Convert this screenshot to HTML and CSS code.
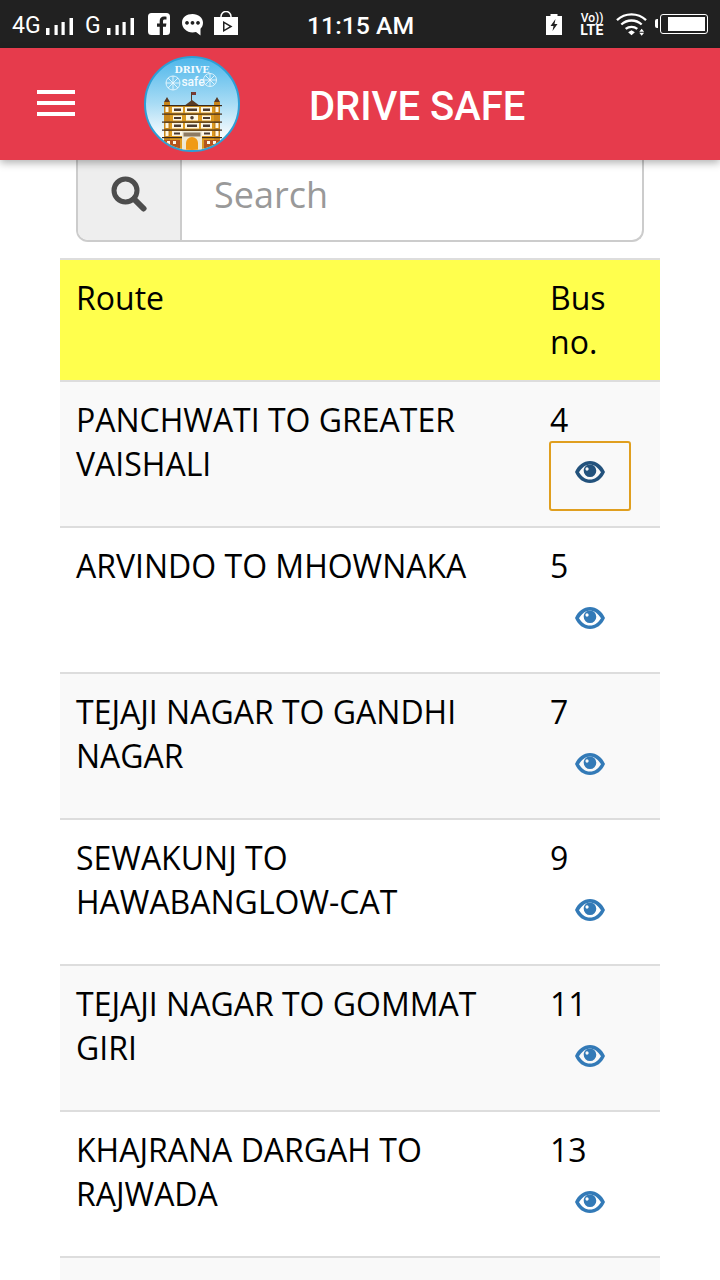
FILE: index.html
```html
<!DOCTYPE html>
<html lang="en">
<head>
<meta charset="utf-8">
<title>Drive Safe</title>
<link rel="stylesheet" href="styles.css">
</head>
<body>
<svg class="defs" width="0" height="0" aria-hidden="true">
  <symbol id="eye" viewBox="0 0 30 24">
    <path fill-rule="evenodd" d="M15 1C8.500 1 3.200 5 0 12c3.200 7 8.500 11 15 11s11.800-4 15-11C26.800 5 21.500 1 15 1zM4 12.200C6.700 8.200 10.500 4.600 15 4.600s8.300 3.600 11 7.600C23.300 16.600 19.800 19.600 15 19.600S6.700 16.600 4 12.200z"/>
    <path fill-rule="evenodd" d="M15 4.500a6.300 6.300 0 1 1-6.300 6.300c0-3.500 2.800-6.300 6.300-6.300zM12 7.200c-.9 0-1.500.8-1.500 1.800s.6 1.700 1.500 1.700 1.600-.7 1.600-1.700-.7-1.800-1.600-1.800z"/>
  </symbol>
  <symbol id="bars" viewBox="0 0 28 17">
    <rect x="0" y="10" width="3.500" height="7"/><rect x="8.500" y="7" width="3.200" height="10"/><rect x="15.500" y="4" width="3.200" height="13"/><rect x="23.500" y="0" width="3.500" height="17"/>
  </symbol>
</svg>
<div class="statusbar">
  <div class="status-left">
    <span class="net net-4g">4G</span>
    <svg class="bars" aria-hidden="true"><use href="#bars"/></svg>
    <span class="net net-g">G</span>
    <svg class="bars" aria-hidden="true"><use href="#bars"/></svg>
    <svg class="ic-fb" viewBox="0 0 22 22" aria-hidden="true"><path fill-rule="evenodd" d="M3.500 0h15A3.500 3.500 0 0 1 22 3.500v15a3.500 3.500 0 0 1-3.500 3.500H15v-8.300h2.900l.5-3.300H15V8.300c0-1 .4-1.700 1.800-1.700h1.700V3.700c-.8-.1-1.700-.2-2.500-.2-2.600 0-4.300 1.600-4.300 4.400v2.500H9v3.300h2.700V22H3.500A3.500 3.500 0 0 1 0 18.500v-15A3.500 3.500 0 0 1 3.500 0z"/></svg>
    <svg class="ic-msg" viewBox="0 0 21 22" aria-hidden="true"><path fill-rule="evenodd" d="M10.500 0c5.800 0 10.500 3.700 10.500 8.700 0 2.500-1 4.500-2.500 6V21.500L14 18c-1.100.3-2.300.4-3.500.4C4.700 18.400 0 14 0 8.700S4.700 0 10.500 0zM5 7a1.900 1.900 0 1 0 .01 0zM10.500 7a1.900 1.900 0 1 0 .01 0zM16 7a1.900 1.900 0 1 0 .01 0z"/></svg>
    <svg class="ic-play" viewBox="0 0 24 24" aria-hidden="true"><path fill="none" stroke="#fff" stroke-width="1.500" d="M7 9V5.500a5 5 0 0 1 10 0V9"/><path fill-rule="evenodd" d="M0 6h24v18H0zM9 10v11l9.500-5.500zM10.500 12.500l5 3-5 3z"/></svg>
  </div>
  <div class="status-time">11:15 AM</div>
  <div class="status-right">
    <svg class="ic-charge" viewBox="0 0 16 21" aria-hidden="true"><path fill-rule="evenodd" d="M4.500 0h7v2H16v19H0V2h4.500zM9.500 5L4.500 12h3l-1 5 5-7h-3z"/></svg>
    <span class="volte"><span class="volte-top">Vo))</span><span class="volte-bot">LTE</span></span>
    <svg class="ic-wifi" viewBox="0 0 32 24" aria-hidden="true"><g fill="none" stroke="#fff" stroke-width="2.400"><path d="M1 8c8.500-8 21.500-8 30 0"/><path d="M5.500 12.500c6-5.500 15-5.500 21 0"/><path d="M10 17c3.500-2.800 8.500-2.800 12 0"/></g><path d="M12.500 20.500l3.500-2 3.500 2-3.500 3zM26.500 17l2.500 3h-5zM24 21h5l-2.500 3z"/></svg>
    <span class="battery"><span class="battery-fill"></span></span>
  </div>
</div>
<header class="appbar">
  <button class="menu" aria-label="Menu"><span></span><span></span><span></span></button>
  <svg class="logo" viewBox="0 0 96 96" role="img" aria-label="Drive Safe logo">
    <defs><linearGradient id="sky" x1="0" y1="0" x2="0" y2="1"><stop offset="0" stop-color="#4db6ea"/><stop offset=".5" stop-color="#a9dcf5"/><stop offset=".82" stop-color="#f4fafd"/></linearGradient><clipPath id="disc"><circle cx="48" cy="48" r="46"/></clipPath></defs>
    <circle cx="48" cy="48" r="47" fill="url(#sky)" stroke="#2e9fd6" stroke-width="2"/>
    <g clip-path="url(#disc)">
      <text x="48" y="17" class="logo-drive" text-anchor="middle">DRIVE</text>
      <text x="49" y="30" class="logo-safe" text-anchor="middle">safe</text>
      <g fill="none" stroke="#eaf7fd" stroke-width=".9"><circle cx="29" cy="27" r="7"/><path d="M29 20v14M22 27h14M24 22l10 10M34 22l-10 10"/><circle cx="66" cy="24" r="6.500"/><path d="M66 17.500v13M59.500 24h13M61.500 19.500l9 9M70.500 19.500l-9 9"/></g>
      <path d="M47 36h1v9h-1z" fill="#5a3b25"/><path d="M48 36h4v3h-4z" fill="#7a3b35"/>
      <rect x="20" y="50" width="56" height="46" fill="#dd9a20"/>
      <rect x="20" y="46" width="6" height="50" fill="#c9861b"/><rect x="70" y="46" width="6" height="50" fill="#c9861b"/>
      <path d="M20 46l3-5 3 5zM70 46l3-5 3 5zM40 50l8-6 8 6z" fill="#5a3b25"/>
      <g fill="#3c2a1d"><rect x="18" y="49" width="60" height="1.200"/><rect x="18" y="57.500" width="60" height="1.200"/><rect x="18" y="65.500" width="60" height="1.200"/><rect x="18" y="73.500" width="60" height="1.200"/><rect x="18" y="81" width="60" height="1.200"/></g>
      <g fill="#fdf6e4"><rect x="28" y="51" width="11" height="5.500"/><rect x="57" y="51" width="11" height="5.500"/><rect x="41" y="51" width="14" height="5.500"/><rect x="28" y="67" width="11" height="5.500"/><rect x="57" y="67" width="11" height="5.500"/><rect x="41" y="67" width="14" height="5.500"/><rect x="29" y="59.500" width="9" height="5"/><rect x="58" y="59.500" width="9" height="5"/><rect x="42" y="59" width="12" height="5.500"/><rect x="21.500" y="51" width="3" height="5"/><rect x="71.500" y="51" width="3" height="5"/><rect x="21.500" y="67" width="3" height="5"/><rect x="71.500" y="67" width="3" height="5"/><rect x="21.500" y="75" width="3" height="5"/><rect x="71.500" y="75" width="3" height="5"/><rect x="28" y="75" width="10" height="5"/><rect x="58" y="75" width="10" height="5"/></g>
      <g fill="#4a3a30"><rect x="30" y="52.500" width="7" height="2.500"/><rect x="59" y="52.500" width="7" height="2.500"/><rect x="43" y="52.500" width="10" height="2.500"/><rect x="30" y="68.500" width="7" height="2.500"/><rect x="59" y="68.500" width="7" height="2.500"/><rect x="43" y="68.500" width="10" height="2.500"/><rect x="30" y="61" width="7" height="2"/><rect x="59" y="61" width="7" height="2"/><circle cx="48" cy="61.800" r="1.800"/><rect x="30" y="76.500" width="6" height="2"/><rect x="60" y="76.500" width="6" height="2"/></g>
      <rect x="38" y="75" width="20" height="21" fill="#efe8d4"/><rect x="39.500" y="76.500" width="17" height="4" fill="#8d7a63"/>
      <path d="M42 96V87a6 6 0 0 1 12 0v9z" fill="#f09a16"/>
      <g fill="#b3541e"><rect x="20" y="84" width="16" height="12"/><rect x="60" y="84" width="16" height="12"/></g>
      <g fill="#fdf6e4"><rect x="23" y="85" width="3" height="3"/><rect x="29" y="85" width="3" height="3"/><rect x="63" y="85" width="3" height="3"/><rect x="69" y="85" width="3" height="3"/></g>
    </g>
  </svg>
  <h1 class="title">DRIVE SAFE</h1>
</header>
<main class="content">
  <div class="search">
    <span class="search-addon">
      <svg viewBox="0 0 36 36" aria-hidden="true"><circle cx="14.500" cy="14.500" r="11.500" fill="none" stroke="#4d4d4d" stroke-width="5"/><path d="M23 23l9.500 9.500" stroke="#4d4d4d" stroke-width="6" stroke-linecap="round"/></svg>
    </span>
    <span class="search-input">Search</span>
  </div>
  <table class="routes">
    <thead>
      <tr><th class="col-route">Route</th><th class="col-bus">Bus no.</th></tr>
    </thead>
    <tbody>
      <tr><td>PANCHWATI TO GREATER VAISHALI</td><td>4<a class="view view-active" href="#"><svg aria-hidden="true"><use href="#eye"/></svg></a></td></tr>
      <tr><td>ARVINDO TO MHOWNAKA</td><td>5<a class="view" href="#"><svg aria-hidden="true"><use href="#eye"/></svg></a></td></tr>
      <tr><td>TEJAJI NAGAR TO GANDHI NAGAR</td><td>7<a class="view" href="#"><svg aria-hidden="true"><use href="#eye"/></svg></a></td></tr>
      <tr><td>SEWAKUNJ TO HAWABANGLOW-CAT</td><td>9<a class="view" href="#"><svg aria-hidden="true"><use href="#eye"/></svg></a></td></tr>
      <tr><td>TEJAJI NAGAR TO GOMMAT GIRI</td><td>11<a class="view" href="#"><svg aria-hidden="true"><use href="#eye"/></svg></a></td></tr>
      <tr><td>KHAJRANA DARGAH TO RAJWADA</td><td>13<a class="view" href="#"><svg aria-hidden="true"><use href="#eye"/></svg></a></td></tr>
      <tr><td>&nbsp;</td><td>&nbsp;</td></tr>
    </tbody>
  </table>
</main>
</body>
</html>
```

FILE: styles.css
```css
* { box-sizing: border-box; }
html, body { margin: 0; padding: 0; }
body { width: 720px; height: 1280px; overflow: hidden; background: #fff; font-family: "Open Sans", sans-serif; color: #000; }
.defs { position: absolute; }

.statusbar { height: 48px; background: #212121; color: #fff; display: flex; align-items: center; fill: #fff; font-family: Roboto, sans-serif; }
.status-left { display: flex; align-items: center; padding-left: 12px; width: 307px; flex: none; }
.net { font-size: 23px; line-height: 24px; }
.net-4g { width: 34px; margin-top: 4px; }
.net-g { width: 22px; margin-left: 11px; margin-top: 4px; }
.bars { width: 28px; height: 17px; margin-top: 5px; }
.ic-fb { width: 22px; height: 22px; margin-left: 13px; }
.ic-msg { width: 21px; height: 22px; margin-left: 12px; margin-top: 1px; }
.ic-play { width: 24px; height: 24px; margin-left: 11px; margin-top: -2px; }
.status-time { font-size: 24.800px; font-weight: 500; width: 200px; flex: none; margin-top: 3px; }
.status-right { display: flex; align-items: center; flex: 1; }
.ic-charge { width: 16px; height: 21px; margin-left: 39px; margin-top: 1px; }
.volte { display: flex; flex-direction: column; align-items: center; width: 22px; margin-left: 19px; font-weight: 700; }
.volte-top { font-size: 12px; line-height: 11px; font-weight: 500; }
.volte-bot { font-size: 14px; line-height: 12px; letter-spacing: .3px; }
.ic-wifi { width: 31px; height: 24px; margin-left: 13px; margin-top: -1px; }
.battery { width: 48px; height: 20px; margin-left: 13px; border: 1.500px solid #fff; border-radius: 3px; padding: 2px 2px 2px 7px; position: relative; }
.battery::before { content: ""; position: absolute; left: -6px; top: 4px; width: 3px; height: 9px; background: #fff; border-radius: 2px 0 0 2px; }
.battery-fill { display: block; height: 100%; background: #fff; }

.appbar { height: 112px; background: #e63b4c; display: flex; align-items: center; position: relative; z-index: 2; box-shadow: 0 3px 8px rgba(0,0,0,.3); }
.menu { width: 38px; height: 26px; margin: -2px 0 0 37px; padding: 0; border: 0; background: none; display: flex; flex-direction: column; justify-content: space-between; }
.menu span { display: block; height: 4px; background: #fff; }
.logo { width: 96px; height: 96px; margin: -1px 0 0 69px; flex: none; }
.logo-drive { font-family: "DejaVu Serif", serif; font-weight: 700; font-size: 9.500px; fill: #f3fbff; }
.logo-safe { font-family: Roboto, sans-serif; font-weight: 500; font-size: 12px; fill: #f3fbff; }
.title { margin: 6px 0 0 69px; font-family: Roboto, sans-serif; font-weight: 500; font-size: 40px; color: #fff; line-height: 44px; }

.content { padding: 0 60px; }
.search { display: flex; height: 82px; margin: 0 16px 16px; border: 2px solid #ccc; border-top: 0; border-radius: 0 0 12px 12px; overflow: hidden; }
.search-addon { width: 104px; flex: none; background: #eee; border-right: 2px solid #ccc; display: flex; align-items: center; justify-content: center; padding-bottom: 12px; }
.search-addon svg { width: 36px; height: 36px; }
.search-input { flex: 1; padding: 0 32px; font-size: 36px; line-height: 70px; color: #999; }

.routes { width: 600px; border-collapse: collapse; table-layout: fixed; font-size: 32px; line-height: 44px; }
.col-route { width: 474px; }
.routes th, .routes td { padding: 16px 16px 15px; text-align: left; vertical-align: top; font-weight: 400; border-top: 2px solid #ddd; }
.routes thead th { background: #ffff4d; padding-bottom: 16px; }
.routes tbody tr:nth-child(odd) td { background: #f9f9f9; }
.view { display: flex; width: 82px; height: 70px; margin: -1px 0 0 -1px; padding-bottom: 9px; align-items: center; justify-content: center; fill: #337ab7; border: 2px solid transparent; border-radius: 3px; }
.view svg { width: 30px; height: 24px; }
.view-active { border-color: #e09f1f; fill: #23527c; }
```
